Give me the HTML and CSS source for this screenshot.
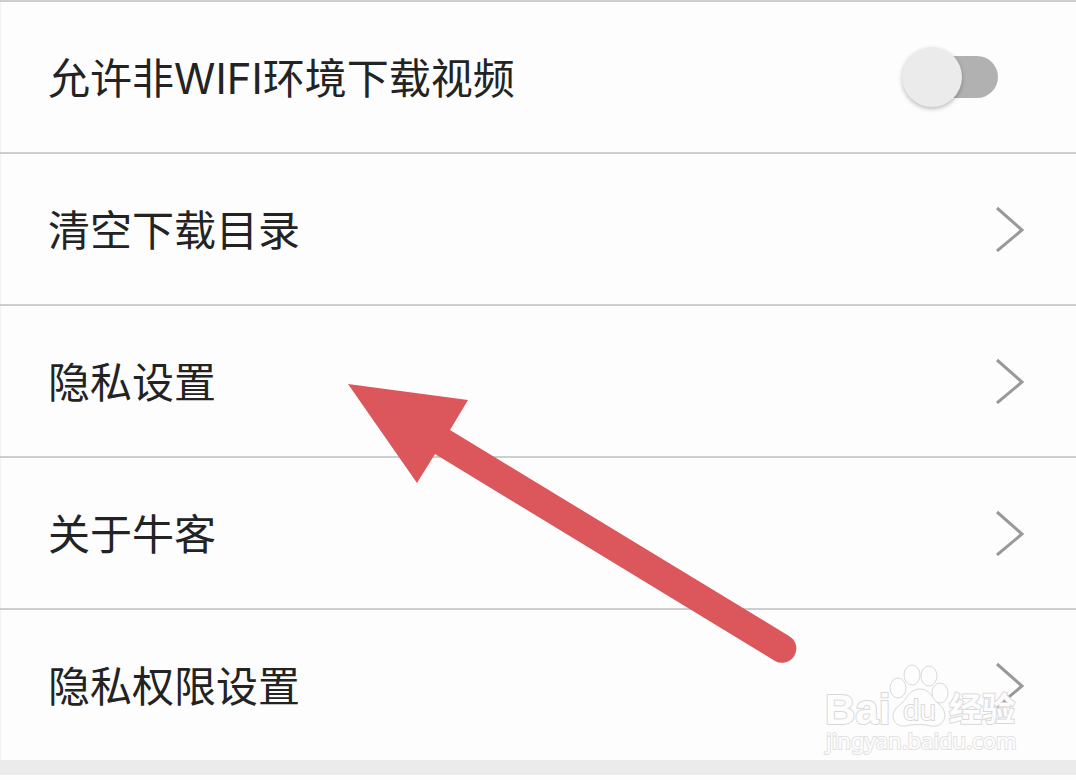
FILE: index.html
```html
<!DOCTYPE html>
<html lang="zh-CN">
<head>
<meta charset="utf-8">
<meta name="viewport" content="width=device-width, initial-scale=1">
<title>设置</title>
<link rel="stylesheet" href="styles.css">
</head>
<body>
<main class="screen">
  <ul class="settings">
    <li class="item">
      <label class="row row-switch" for="wifi">
        <span class="label">允许非WIFI环境下载视频</span>
        <input class="switch" type="checkbox" role="switch" id="wifi">
      </label>
    </li>
    <li class="item">
      <a class="row" href="#clear"><span class="label">清空下载目录</span>
        <svg class="chevron" viewBox="0 0 30 46" aria-hidden="true"><path d="M2 2 27 24 2 45"/></svg></a>
    </li>
    <li class="item">
      <a class="row" href="#privacy"><span class="label">隐私设置</span>
        <svg class="chevron" viewBox="0 0 30 46" aria-hidden="true"><path d="M2 2 27 24 2 45"/></svg></a>
    </li>
    <li class="item">
      <a class="row" href="#about"><span class="label">关于牛客</span>
        <svg class="chevron" viewBox="0 0 30 46" aria-hidden="true"><path d="M2 2 27 24 2 45"/></svg></a>
    </li>
    <li class="item">
      <a class="row" href="#permissions"><span class="label">隐私权限设置</span>
        <svg class="chevron" viewBox="0 0 30 46" aria-hidden="true"><path d="M2 2 27 24 2 45"/></svg></a>
    </li>
  </ul>
  <div class="divider"></div>
  <svg class="arrow" viewBox="0 0 450 282" aria-hidden="true">
    <path d="M1 1 121 17 103 47 442 253A14 14 0 0 1 428 278L88 71 70 100Z"/>
  </svg>
  <svg class="watermark" viewBox="0 0 200 100" role="img" aria-label="Baidu 经验 jingyan.baidu.com">
    <text class="mark-latin" x="3" y="62">Bai</text>
    <ellipse cx="76" cy="26" rx="8" ry="10"/>
    <ellipse cx="90" cy="13" rx="8" ry="10"/>
    <ellipse cx="107" cy="14" rx="8" ry="10"/>
    <ellipse cx="118" cy="31" rx="8" ry="10"/>
    <path d="M98 27C87 27 86 36 79 42C66 50 70 65 83 64C92 62 102 62 109 64C123 66 127 51 118 43C110 37 108 27 98 27Z"/>
    <text class="mark-du" x="81" y="58">du</text>
    <text class="mark-cjk" x="127" y="59">经验</text>
    <text class="mark-url" x="4" y="87">jingyan.baidu.com</text>
  </svg>
</main>
</body>
</html>
```
FILE: styles.css
```css
* { box-sizing: border-box; }

body {
  margin: 0;
  background: #fdfdfd;
  color: #232323;
  font-family: Inter, "Noto Sans CJK SC", sans-serif;
}

.screen {
  position: relative;
  background: linear-gradient(#f3f3f3, #f3f3f3) left / 1px 100% no-repeat;
  overflow: hidden;
}

.settings {
  margin: 0;
  padding: 0;
  list-style: none;
}

.item { border-top: 2px solid #cecece; }

.row {
  display: flex;
  align-items: center;
  justify-content: space-between;
  padding: 44px 51px 44px 48px;
  color: inherit;
  text-decoration: none;
}

.row-switch { padding-right: 78px; }

.label {
  padding-top: 4px;
  font-size: 42px;
  line-height: 58px;
}

.switch {
  appearance: none;
  position: relative;
  display: flex;
  align-items: center;
  width: 96px;
  height: 60px;
  margin: 0;
}

.switch::before {
  content: "";
  position: absolute;
  inset: 9px 0 9px 12px;
  border-radius: 21px;
  background: #b1b1b1;
}

.switch::after {
  content: "";
  position: relative;
  width: 60px;
  height: 60px;
  border-radius: 50%;
  background: #ebebeb;
  box-shadow: 0 2px 4px rgba(0, 0, 0, 0.25);
}

.switch:checked::after { margin-left: auto; }

.chevron {
  width: 30px;
  height: 46px;
  fill: none;
  stroke: #999;
  stroke-width: 3;
}

.divider {
  height: 15px;
  background: #ebebeb;
}

.arrow {
  position: absolute;
  left: 347px;
  top: 383px;
  width: 450px;
  height: 282px;
  fill: #dc575c;
  pointer-events: none;
}

.watermark {
  position: absolute;
  right: 54px;
  bottom: 13px;
  width: 200px;
  height: 100px;
  fill: #fdfdfd;
  stroke: #d9d9d9;
  stroke-width: 1;
  pointer-events: none;
}

.watermark text {
  paint-order: stroke;
  stroke-width: 2;
}

.mark-latin { font: bold 42px "Liberation Sans", sans-serif; }
.mark-du { font: 27px "Open Sans", sans-serif; }
.mark-cjk { font: bold 33px "Noto Sans CJK SC", sans-serif; }
.watermark .mark-url { font: 22px "Noto Sans", sans-serif; stroke: #e2e2e2; }
```
